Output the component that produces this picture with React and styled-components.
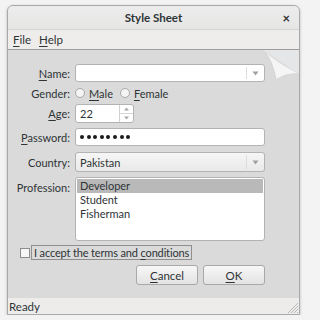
import styled, { createGlobalStyle } from 'styled-components'

const GlobalStyle = createGlobalStyle`
  html, body {
    margin: 0;
    padding: 0;
    background: #f3f3f3;
  }
  body {
    font-family: Lato, "Noto Sans", sans-serif;
    font-size: 11px;
    color: #2e3436;
  }
`

const Window = styled.div`
  margin: 5px 6px 0 7px;
  width: 291px;
  border: 1px solid #a9a9a9;
  border-radius: 6px 6px 0 0;
  box-shadow: 0 1px 3px rgba(0, 0, 0, 0.25);
  overflow: hidden;
  background: #dadada;
`

const TitleBar = styled.div`
  height: 23px;
  display: flex;
  align-items: center;
  justify-content: center;
  position: relative;
  background: linear-gradient(#ececec, #e6e6e5);
  border-bottom: 1px solid #d4d4d4;
  font-weight: bold;
  font-size: 11.5px;
  color: #2e3436;
`

const Close = styled.span`
  position: absolute;
  right: 9px;
  top: 4px;
  font-size: 13px;
  font-weight: bold;
  color: #333;
`

const MenuBar = styled.div`
  height: 19px;
  display: flex;
  align-items: center;
  gap: 8px;
  padding-left: 5px;
  background: #efedeb;
  border-bottom: 1px solid #9e9e9e;
  font-size: 11.5px;
`

const MenuItem = styled.span`
  color: #2e3436;
`

const Key = styled.u`
  text-decoration-thickness: 1px;
  text-underline-offset: 2px;
`

const Content = styled.div`
  position: relative;
  padding: 14px 34px 13px 8px;
`

const Curl = styled.svg`
  position: absolute;
  top: 0;
  right: 0;
`

const Row = styled.div`
  display: flex;
  align-items: ${p => (p.$top ? 'flex-start' : 'center')};
  gap: 5px;
  margin-top: ${p => p.$mt}px;
  height: ${p => p.$h}px;
`

const Label = styled.div`
  width: 54px;
  flex: none;
  text-align: right;
  white-space: nowrap;
  padding-top: ${p => (p.$top ? 4 : 0)}px;
`

const Field = styled.div`
  flex: ${p => (p.$w ? 'none' : 1)};
  width: ${p => (p.$w ? `${p.$w}px` : 'auto')};
  height: 100%;
  box-sizing: border-box;
  border: 1px solid #b3b3b3;
  border-radius: 3px;
  background: ${p => (p.$button ? 'linear-gradient(#f6f6f6, #e9e9e9)' : '#ffffff')};
  display: flex;
  align-items: center;
  padding-left: 4px;
  position: relative;
`

const Arrow = styled.div`
  position: absolute;
  right: 0;
  top: 2px;
  bottom: 2px;
  width: 17px;
  border-left: 1px solid #dcdcdc;
  display: flex;
  align-items: center;
  justify-content: center;
`

const Spin = styled.div`
  position: absolute;
  right: 0;
  top: 0;
  bottom: 0;
  width: 13px;
  border-left: 1px solid #d0d0d0;
  display: flex;
  flex-direction: column;
`

const SpinHalf = styled.div`
  flex: 1;
  display: flex;
  align-items: center;
  justify-content: center;
  border-top: ${p => (p.$down ? '1px solid #d6d6d6' : 'none')};
`

const Dots = styled.div`
  display: flex;
  gap: 2.6px;
`

const Dot = styled.span`
  width: 4px;
  height: 4px;
  border-radius: 50%;
  background: #1c1c1c;
`

const RadioGroup = styled.div`
  display: flex;
  align-items: center;
  gap: 4px;
`

const Radio = styled.span`
  width: 8px;
  height: 8px;
  border-radius: 50%;
  border: 1px solid #a9a9a9;
  background: #f4f4f4;
  margin-left: ${p => p.$ml || 0}px;
`

const List = styled.div`
  flex: 1;
  height: 100%;
  box-sizing: border-box;
  border: 1px solid #b3b3b3;
  border-radius: 3px;
  background: #fff;
  padding: 1px;
`

const ListItem = styled.div`
  height: 14px;
  line-height: 14px;
  padding-left: 3px;
  background: ${p => (p.$selected ? '#b9b9b9' : 'transparent')};
`

const CheckRow = styled.div`
  display: flex;
  align-items: center;
  gap: 1px;
  margin-top: 4px;
  margin-left: 4px;
  height: 15px;
`

const Check = styled.span`
  width: 8px;
  height: 8px;
  border: 1px solid #8c8c8c;
  background: #f6f6f6;
`

const FocusFrame = styled.span`
  border: 1px solid #8f8f8f;
  padding: 0 2px;
  line-height: 13px;
  letter-spacing: -0.15px;
`

const Buttons = styled.div`
  display: flex;
  justify-content: flex-end;
  gap: 5px;
  margin-top: 5px;
`

const Button = styled.button`
  width: 62px;
  height: 20px;
  border: 1px solid #a8a8a8;
  border-radius: 3px;
  background: linear-gradient(#f7f7f7, #e3e3e3);
  font: inherit;
  font-size: 11.5px;
  color: #2e3436;
  padding: 0;
`

const StatusBar = styled.div`
  height: 16px;
  display: flex;
  align-items: center;
  padding-left: 1px;
  background: #edecea;
  position: relative;
  font-size: 11.5px;
`

const Grip = styled.svg`
  position: absolute;
  right: 0;
  bottom: 0;
`

const DownTri = () => (
  <svg width="7" height="5" viewBox="0 0 7 5">
    <path d="M0.5 0.5 L6.5 0.5 L3.5 4.5 Z" fill="#a0a0a0" />
  </svg>
)

const SmallTri = ({ up }) => (
  <svg width="5" height="4" viewBox="0 0 5 4">
    <path d={up ? 'M0 3.5 L5 3.5 L2.5 0.5 Z' : 'M0 0.5 L5 0.5 L2.5 3.5 Z'} fill="#a8a8a8" />
  </svg>
)

export default function App() {
  return (
    <>
      <GlobalStyle />
      <Window>
        <TitleBar>
          Style Sheet
          <Close>×</Close>
        </TitleBar>
        <MenuBar>
          <MenuItem><Key>F</Key>ile</MenuItem>
          <MenuItem><Key>H</Key>elp</MenuItem>
        </MenuBar>
        <Content>
          <Curl width="36" height="32" viewBox="0 0 36 32">
            <path d="M0 0 L36 0 L36 24 Z" fill="#e4e6e8" />
            <path d="M2 2 Q9 10 13 29 Q22 23 34 23 Q16 14 2 2 Z" fill="#f5f5f5" />
            <path d="M2 2 Q9 10 13 29" stroke="#cdcdcd" strokeWidth="0.8" fill="none" />
          </Curl>
          <Row $mt={0} $h={18}>
            <Label><Key>N</Key>ame:</Label>
            <Field>
              <Arrow><DownTri /></Arrow>
            </Field>
          </Row>
          <Row $mt={3} $h={16}>
            <Label>Gender:</Label>
            <RadioGroup>
              <Radio />
              <span><Key>M</Key>ale</span>
              <Radio $ml={3} />
              <span><Key>F</Key>emale</span>
            </RadioGroup>
          </Row>
          <Row $mt={3} $h={19}>
            <Label><Key>A</Key>ge:</Label>
            <Field $w={59}>
              22
              <Spin>
                <SpinHalf><SmallTri up /></SpinHalf>
                <SpinHalf $down><SmallTri /></SpinHalf>
              </Spin>
            </Field>
          </Row>
          <Row $mt={5} $h={18}>
            <Label><Key>P</Key>assword:</Label>
            <Field>
              <Dots>
                {Array.from({ length: 8 }, (_, i) => <Dot key={i} />)}
              </Dots>
            </Field>
          </Row>
          <Row $mt={6} $h={20}>
            <Label>Country:</Label>
            <Field $button>
              Pakistan
              <Arrow><DownTri /></Arrow>
            </Field>
          </Row>
          <Row $mt={5} $h={64} $top>
            <Label $top>Profession:</Label>
            <List>
              <ListItem $selected>Developer</ListItem>
              <ListItem>Student</ListItem>
              <ListItem>Fisherman</ListItem>
            </List>
          </Row>
          <CheckRow>
            <Check />
            <FocusFrame>I accept the terms and <Key>c</Key>onditions</FocusFrame>
          </CheckRow>
          <Buttons>
            <Button><Key>C</Key>ancel</Button>
            <Button><Key>O</Key>K</Button>
          </Buttons>
        </Content>
        <StatusBar>
          Ready
          <Grip width="14" height="14" viewBox="0 0 14 14">
            <path d="M13 3 L3 13 M13 6 L6 13 M13 9 L9 13 M13 12 L12 13" stroke="#b8b8b8" strokeWidth="1" />
          </Grip>
        </StatusBar>
      </Window>
    </>
  )
}
